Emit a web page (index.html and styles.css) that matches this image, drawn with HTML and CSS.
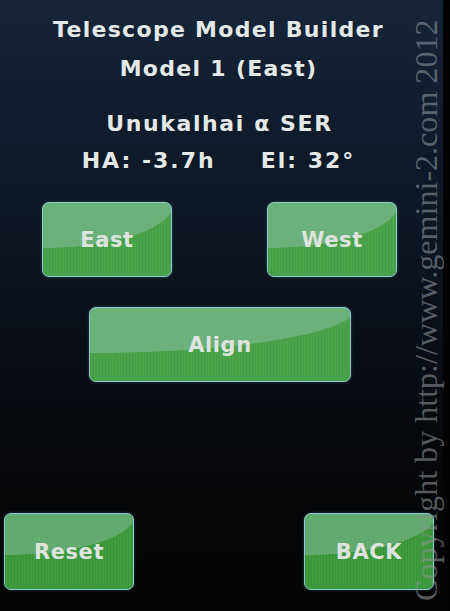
FILE: index.html
```html
<!DOCTYPE html>
<html>
<head>
<meta charset="utf-8">
<link rel="stylesheet" href="styles.css">
</head>
<body>
<div class="screen">
  <header class="title">
    <div>Telescope Model Builder</div>
    <div>Model 1 (East)</div>
  </header>
  <section class="info">
    <div class="star">Unukalhai α SER</div>
    <div class="coords"><span>HA: -3.7h</span><span>El: 32°</span></div>
  </section>
  <div class="row row-pier">
    <button class="btn btn-small">East</button>
    <button class="btn btn-small">West</button>
  </div>
  <div class="row row-align">
    <button class="btn btn-wide">Align</button>
  </div>
  <div class="row row-bottom">
    <button class="btn btn-small">Reset</button>
    <button class="btn btn-small">BACK</button>
  </div>
</div>
<div class="watermark">Copyright by http://www.gemini-2.com 2012</div>
</body>
</html>
```
FILE: styles.css
```css
html, body {
  margin: 0;
  padding: 0;
}
body {
  width: 450px;
  height: 611px;
  overflow: hidden;
  position: relative;
  background: #030303;
  font-family: "DejaVu Sans", Verdana, sans-serif;
  font-weight: bold;
  color: #e4e8e6;
}
.screen {
  width: 443px;
  height: 611px;
  box-sizing: border-box;
  display: flex;
  flex-direction: column;
  align-items: center;
  padding-top: 10px;
  padding-bottom: 21px;
  background: linear-gradient(180deg, #172539 0%, #0f1a29 25%, #0a0f17 55%, #050608 80%, #040404 100%);
}
.title {
  font-size: 22px;
  line-height: 39px;
  letter-spacing: 1.3px;
  text-align: center;
  margin-left: -6px;
}
.info {
  margin-top: 17px;
  font-size: 22px;
  line-height: 37px;
  display: flex;
  flex-direction: column;
  align-items: center;
}
.star {
  letter-spacing: 1.6px;
  margin-left: -4px;
}
.coords {
  display: flex;
  gap: 45px;
  letter-spacing: 2px;
  margin-left: -6px;
}
.row {
  display: flex;
  width: 100%;
  box-sizing: border-box;
}
.row-pier {
  margin-top: 23px;
  justify-content: space-between;
  padding: 0 46px 0 42px;
}
.row-align {
  margin-top: 30px;
  justify-content: flex-start;
  padding-left: 89px;
}
.row-bottom {
  margin-top: auto;
  justify-content: space-between;
  padding: 0 9px 0 4px;
}
.btn {
  height: 75px;
  border: 1.5px solid #8cc9d2;
  border-radius: 7px;
  background:
    radial-gradient(ellipse 103% 62% at 0% 0%, rgba(150, 195, 180, 0.45) 98.5%, rgba(150, 195, 180, 0) 100%),
    repeating-linear-gradient(90deg, rgba(0,0,0,0.05) 0 1px, rgba(0,0,0,0) 1px 3px),
    #4aa44b;
  color: #dde4de;
  font-family: "DejaVu Sans", Verdana, sans-serif;
  font-weight: bold;
  font-size: 21px;
  letter-spacing: 0.6px;
  padding: 0;
  box-shadow: 0 0 3px rgba(120, 190, 220, 0.35);
}
.btn-small {
  width: 130px;
}
.btn-wide {
  width: 262px;
}
.row-bottom .btn {
  height: 77px;
  background:
    radial-gradient(ellipse 103% 55% at 0% 0%, rgba(145, 190, 170, 0.45) 98.5%, rgba(145, 190, 170, 0) 100%),
    repeating-linear-gradient(90deg, rgba(0,0,0,0.06) 0 1px, rgba(0,0,0,0) 1px 3px),
    #3e9c3e;
}
.watermark {
  position: absolute;
  left: 410px;
  top: 601px;
  width: 600px;
  transform-origin: 0 0;
  transform: rotate(-90deg);
  font-family: "Liberation Serif", "Times New Roman", serif;
  font-weight: normal;
  font-size: 32.1px;
  line-height: 32px;
  white-space: nowrap;
  color: rgba(140, 146, 150, 0.6);
}
```
